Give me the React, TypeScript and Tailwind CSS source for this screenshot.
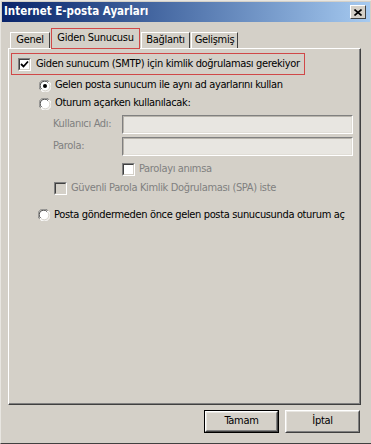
import React from "react";

const FONT = { fontFamily: '"DejaVu Sans Condensed", "Liberation Sans", Arial, sans-serif' };

function Radio({ checked }: { checked?: boolean }) {
  return (
    <svg width="12" height="12" viewBox="0 0 12 12" className="shrink-0">
      <circle cx="6" cy="6" r="5.5" fill="#ffffff" />
      <path d="M1.6 9.9 A5.5 5.5 0 0 1 9.9 1.6" stroke="#808080" strokeWidth="1" fill="none" />
      <path d="M2.5 9 A4.3 4.3 0 0 1 9 2.5" stroke="#404040" strokeWidth="1" fill="none" />
      <path d="M10.4 2.1 A5.5 5.5 0 0 1 2.1 10.4" stroke="#ffffff" strokeWidth="1" fill="none" />
      <path d="M9.5 3 A4.3 4.3 0 0 1 3 9.5" stroke="#d4d0c8" strokeWidth="1" fill="none" />
      {checked && <circle cx="6" cy="6" r="2" fill="#000000" />}
    </svg>
  );
}

function Check({ checked, disabled }: { checked?: boolean; disabled?: boolean }) {
  return (
    <div
      className={`w-[13px] h-[13px] shrink-0 border border-t-[#808080] border-l-[#808080] border-b-white border-r-white ${
        disabled ? "bg-[#d4d0c8]" : "bg-white"
      }`}
    >
      <div className="w-full h-full border border-t-[#404040] border-l-[#404040] border-b-[#d4d0c8] border-r-[#d4d0c8] flex items-center justify-center">
        {checked && (
          <svg width="9" height="9" viewBox="0 0 9 9">
            <path d="M1 4 L3.5 6.5 L8 1.5" stroke="#000" strokeWidth="1.8" fill="none" />
          </svg>
        )}
      </div>
    </div>
  );
}

function Input() {
  return (
    <div className="w-[231px] h-[19px] border border-t-[#808080] border-l-[#808080] border-b-white border-r-white">
      <div className="w-full h-full border border-t-[#b8b4ac] border-l-[#b8b4ac] border-b-[#e0ddd6] border-r-[#e0ddd6] bg-[#e8e6e1]" />
    </div>
  );
}

function Button({ label, isDefault }: { label: string; isDefault?: boolean }) {
  return (
    <div className={`w-[75px] h-[23px] ${isDefault ? "border border-black" : ""}`}>
      <div className="w-full h-full border border-t-white border-l-white border-b-[#404040] border-r-[#404040]">
        <div className="w-full h-full border border-b-[#808080] border-r-[#808080] border-t-[#e8e6e1] border-l-[#e8e6e1] flex items-center justify-center text-[11px] tracking-[-0.3px] text-black">
          {label}
        </div>
      </div>
    </div>
  );
}

const tabs = [
  { label: "Genel", w: "w-[40px]", ml: "ml-0" },
  { label: "Giden Sunucusu", w: "w-[89px]", ml: "ml-[1px]" },
  { label: "Bağlantı", w: "w-[49px]", ml: "ml-[1px]" },
  { label: "Gelişmiş", w: "w-[47px]", ml: "ml-[1px]" },
];

export default function App() {
  return (
    <div
      className="w-[371px] h-[444px] bg-[#d4d0c8] flex flex-col border-t border-l border-t-[#e8e6e1] border-l-[#e8e6e1] border-b border-b-[#404040] overflow-hidden whitespace-nowrap"
      style={FONT}
    >
      {/* Title bar */}
      <div className="mx-[1px] mt-[1px] h-[20px] flex items-center justify-between bg-gradient-to-r from-[#0a246a] to-[#a6caf0] pl-[2px] pr-[4px]">
        <span className="text-white font-bold text-[11.5px]">Internet E-posta Ayarları</span>
        <div className="w-[16px] h-[14px] bg-[#d4d0c8] border border-t-white border-l-white border-b-[#404040] border-r-[#404040] flex items-center justify-center">
          <svg width="8" height="7" viewBox="0 0 8 7">
            <path d="M0.5 0.5 L7.5 6.5 M7.5 0.5 L0.5 6.5" stroke="#000" strokeWidth="1.6" />
          </svg>
        </div>
      </div>

      {/* Tabs */}
      <div className="flex items-end h-[26px] pl-[9px]">
        {tabs.map((t, i) => {
          const selected = i === 1;
          return (
            <div
              key={t.label}
              className={
                selected
                  ? `${t.w} ${t.ml} h-[21px] relative z-10 bg-[#d4d0c8] border border-[#d04848] -mb-[1px] flex items-center justify-center text-[11px] tracking-[-0.3px] text-black`
                  : `${t.w} ${t.ml} h-[16px] border-t border-l border-r border-t-white border-l-white border-r-[#404040] flex items-center justify-center text-[11px] tracking-[-0.3px] text-black`
              }
            >
              {t.label}
            </div>
          );
        })}
      </div>

      {/* Panel */}
      <div className="ml-[7px] mr-[10px] h-[357px] border border-t-white border-l-white border-b-[#404040] border-r-[#404040] text-[11px] tracking-[-0.35px] text-black">
        <div className="h-full border-r border-b border-r-[#808080] border-b-[#808080] pt-[4px] pl-[2px]">
          <div className="w-[294px] h-[22px] border border-[#d04848] flex items-center pl-[6px] gap-[5px]">
            <Check checked />
            <span>Giden sunucum (SMTP) için kimlik doğrulaması gerekiyor</span>
          </div>

          <div className="mt-[1px] h-[19px] flex items-center pl-[28px] gap-[4px]">
            <Radio checked />
            <span>Gelen posta sunucum ile aynı ad ayarlarını kullan</span>
          </div>
          <div className="h-[17px] flex items-center pl-[28px] gap-[4px]">
            <Radio />
            <span>Oturum açarken kullanılacak:</span>
          </div>

          <div className="mt-[3px] h-[19px] flex items-center pl-[42px]">
            <span className="w-[69px] text-[#808080]">Kullanıcı Adı:</span>
            <Input />
          </div>
          <div className="mt-[3px] h-[19px] flex items-center pl-[42px]">
            <span className="w-[69px] text-[#808080]">Parola:</span>
            <Input />
          </div>

          <div className="mt-[6px] h-[14px] flex items-center pl-[111px] gap-[4px]">
            <Check />
            <span className="text-[#808080]">Parolayı anımsa</span>
          </div>
          <div className="mt-[5px] h-[14px] flex items-center pl-[43px] gap-[4px]">
            <Check disabled />
            <span className="text-[#808080]">Güvenli Parola Kimlik Doğrulaması (SPA) iste</span>
          </div>

          <div className="mt-[13px] h-[14px] flex items-center pl-[27px] gap-[4px]">
            <Radio />
            <span>Posta göndermeden önce gelen posta sunucusunda oturum aç</span>
          </div>
        </div>
      </div>

      {/* Buttons */}
      <div className="flex justify-end gap-[6px] pr-[11px] mt-[5px]">
        <Button label="Tamam" isDefault />
        <Button label="İptal" />
      </div>
    </div>
  );
}
